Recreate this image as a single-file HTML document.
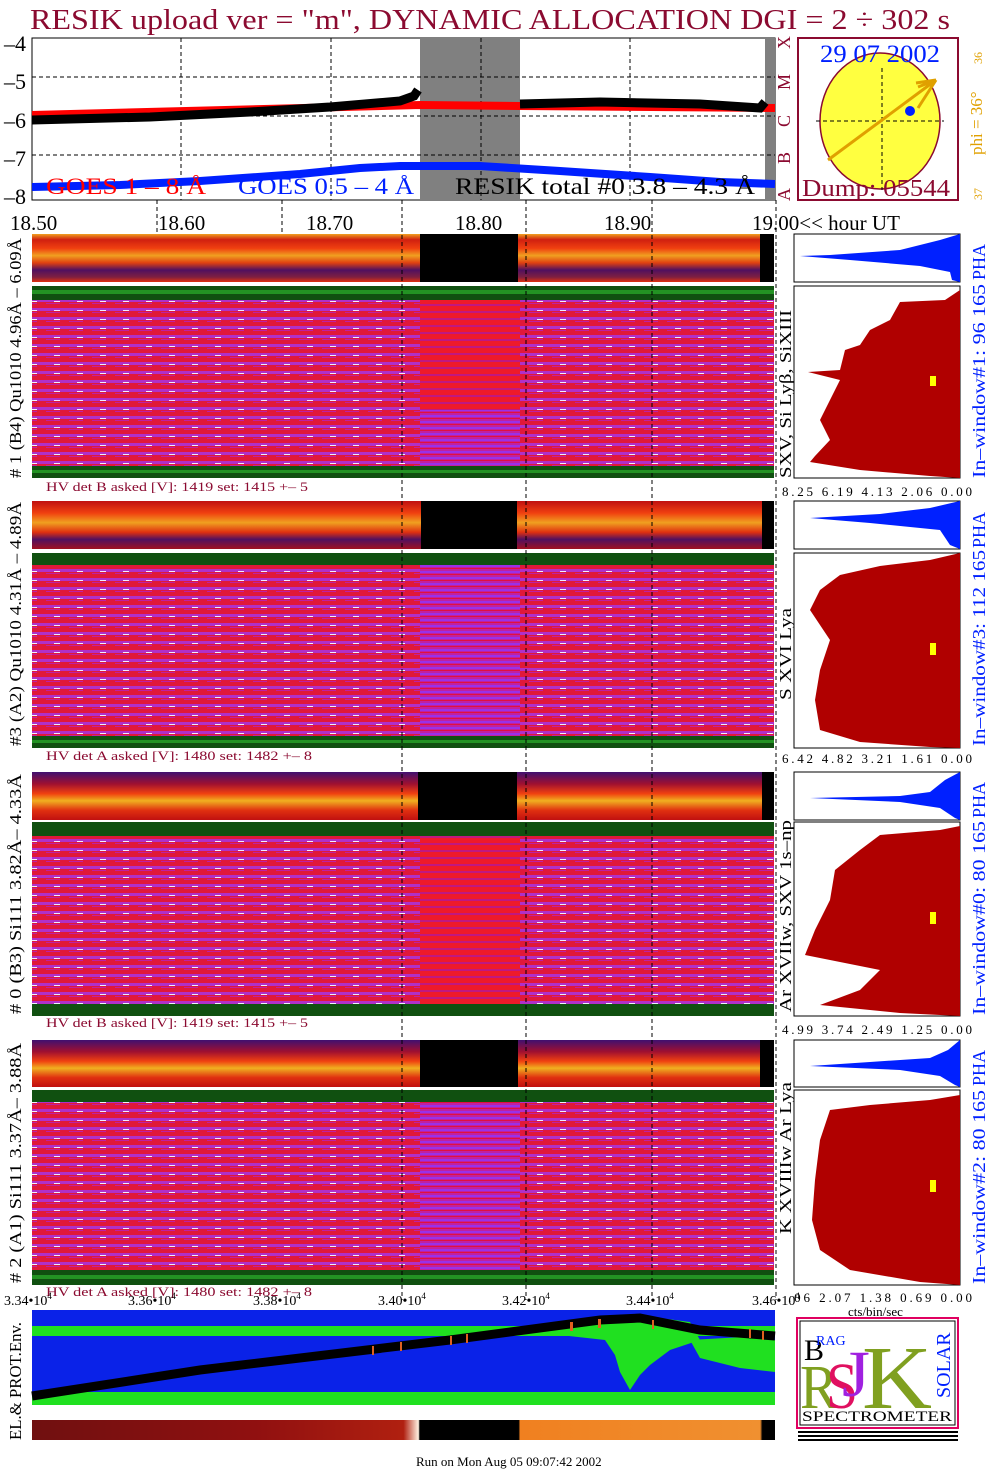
<!DOCTYPE html>
<html><head><meta charset="utf-8"><style>
html,body{margin:0;padding:0;background:#fff}
svg{display:block}
text{font-family:"Liberation Serif",serif}
</style></head><body>
<svg width="1004" height="1476" viewBox="0 0 1004 1476" xmlns="http://www.w3.org/2000/svg">
<defs>
<linearGradient id="small1" x1="0" y1="0" x2="0" y2="1">
<stop offset="0" stop-color="#f0a020"/><stop offset="0.12" stop-color="#d02010"/><stop offset="0.3" stop-color="#f04010"/><stop offset="0.45" stop-color="#f0a020"/><stop offset="0.6" stop-color="#e04010"/><stop offset="0.75" stop-color="#501060"/><stop offset="0.9" stop-color="#802040"/><stop offset="1" stop-color="#e03010"/></linearGradient>
<linearGradient id="small2" x1="0" y1="0" x2="0" y2="1">
<stop offset="0" stop-color="#c01010"/><stop offset="0.25" stop-color="#f04010"/><stop offset="0.45" stop-color="#f0a020"/><stop offset="0.65" stop-color="#e03010"/><stop offset="0.8" stop-color="#501060"/><stop offset="1" stop-color="#a01020"/></linearGradient>
<linearGradient id="small4" x1="0" y1="0" x2="0" y2="1">
<stop offset="0" stop-color="#401070"/><stop offset="0.25" stop-color="#a01030"/><stop offset="0.45" stop-color="#f04010"/><stop offset="0.6" stop-color="#f0b020"/><stop offset="0.8" stop-color="#e03010"/><stop offset="1" stop-color="#c01010"/></linearGradient>
<pattern id="big" width="23" height="9" patternUnits="userSpaceOnUse">
<rect width="23" height="9" fill="#e0183a"/><rect y="2" width="23" height="3" fill="#b030c8"/><rect y="6" width="14" height="1" fill="#c020a0"/><rect x="8" y="4" width="6" height="1" fill="#f0f0ff"/></pattern>
<pattern id="bigr" width="20" height="7" patternUnits="userSpaceOnUse">
<rect width="20" height="7" fill="#ee1a2a"/><rect y="3" width="20" height="2" fill="#c01880"/></pattern>
<pattern id="bigp" width="20" height="6" patternUnits="userSpaceOnUse">
<rect width="20" height="6" fill="#c020a0"/><rect y="1" width="20" height="2" fill="#9a30e8"/><rect y="4" width="20" height="1" fill="#e01040"/></pattern>
<linearGradient id="bot" x1="0" y1="0" x2="1" y2="0">
<stop offset="0" stop-color="#701010"/><stop offset="0.3" stop-color="#901010"/><stop offset="0.5" stop-color="#b02010"/><stop offset="0.52" stop-color="#fff0e0"/><stop offset="0.522" stop-color="#000"/><stop offset="0.655" stop-color="#000"/><stop offset="0.657" stop-color="#f08020"/><stop offset="0.98" stop-color="#f09030"/><stop offset="0.983" stop-color="#000"/><stop offset="1" stop-color="#000"/></linearGradient>
</defs>

<text x="30" y="29" font-size="29" fill="#8b0a30" textLength="920" lengthAdjust="spacingAndGlyphs">RESIK upload ver = "m", DYNAMIC ALLOCATION  DGI =   2 ÷ 302 s</text>

<rect x="32" y="38" width="743" height="162" fill="#fff" stroke="#000"/>
<rect x="420" y="38" width="100" height="162" fill="#808080"/>
<rect x="765" y="38" width="10" height="162" fill="#808080"/>
<g stroke="#000" stroke-dasharray="4,3" stroke-width="1">
<line x1="181" y1="38" x2="181" y2="200"/><line x1="331" y1="38" x2="331" y2="200"/><line x1="481" y1="38" x2="481" y2="200"/><line x1="630" y1="38" x2="630" y2="200"/>
<line x1="32" y1="77" x2="775" y2="77"/><line x1="32" y1="116" x2="775" y2="116"/><line x1="32" y1="155" x2="775" y2="155"/>
</g>
<path d="M32,115 L420,105 L520,106 L775,108" stroke="#ff0000" stroke-width="8" fill="none"/>
<path d="M32,120 L150,117 L250,112 L330,107 L400,101 L414,96 L418,90 M520,104 L600,102 L700,104 L760,108 L765,102" stroke="#000" stroke-width="9" fill="none"/>
<path d="M32,187 L120,185 L200,181 L300,174 L360,168 L400,166 L480,166 L560,171 L650,177 L720,182 L775,184" stroke="#0020ff" stroke-width="8" fill="none"/>
<g font-size="23">
<text x="46" y="194" fill="#ff0000" textLength="160" lengthAdjust="spacingAndGlyphs">GOES 1 – 8 Å</text>
<text x="238" y="194" fill="#0020ff" textLength="176" lengthAdjust="spacingAndGlyphs">GOES 0.5 – 4 Å</text>
<text x="455" y="194" fill="#000" textLength="300" lengthAdjust="spacingAndGlyphs">RESIK total #0  3.8 – 4.3 Å</text>
</g>
<g font-size="22" fill="#000">
<text x="4" y="51">–4</text><text x="4" y="89">–5</text><text x="4" y="128">–6</text><text x="4" y="166">–7</text><text x="4" y="204">–8</text>
</g>
<text transform="translate(790,201) rotate(-90)" font-size="18" fill="#8b0a30" textLength="165" lengthAdjust="spacing">A   B   C   M   X</text>
<rect x="798" y="38" width="160" height="162" fill="#fff" stroke="#8b0a30" stroke-width="2"/>
<ellipse cx="880" cy="121" rx="60" ry="68" fill="#ffff40" stroke="#8b0a30" stroke-width="1.5"/>
<line x1="816" y1="121" x2="944" y2="121" stroke="#000" stroke-dasharray="4,3"/>
<line x1="882" y1="68" x2="882" y2="190" stroke="#000" stroke-dasharray="4,3"/>
<path d="M828,160 L936,80 M918,87 L936,80 L916,83 M918,108 L936,80" stroke="#e0a000" stroke-width="3" fill="none"/>
<circle cx="910" cy="111" r="5" fill="#0020ff"/>
<text x="820" y="62" font-size="25" fill="#0020ff" textLength="120" lengthAdjust="spacingAndGlyphs">29 07 2002</text>
<text x="802" y="196" font-size="24" fill="#8b0a30" textLength="148" lengthAdjust="spacingAndGlyphs">Dump: 05544</text>
<text transform="translate(982,155) rotate(-90)" font-size="17" fill="#e0a000">phi =  36°</text>
<text transform="translate(982,64) rotate(-90)" font-size="12" fill="#e0a000">36</text>
<text transform="translate(982,200) rotate(-90)" font-size="12" fill="#e0a000">37</text>

<g font-size="21" fill="#000">
<text x="10" y="230">18.50</text><text x="158" y="230">18.60</text><text x="306" y="230">18.70</text><text x="455" y="230">18.80</text><text x="604" y="230">18.90</text><text x="752" y="230">19.00&lt;&lt; hour UT</text>
</g>

<g>
<rect x="32" y="234" width="742" height="48" fill="url(#small1)"/>
<rect x="420" y="234" width="98" height="48" fill="#000"/><rect x="760" y="234" width="14" height="48" fill="#000"/>
<rect x="32" y="286" width="742" height="192" fill="url(#big)"/>
<rect x="32" y="286" width="742" height="14" fill="#105010"/><rect x="32" y="290" width="742" height="4" fill="#30c030" opacity="0.6"/>
<rect x="32" y="466" width="742" height="12" fill="#105010"/><rect x="32" y="470" width="742" height="3" fill="#30c030" opacity="0.6"/>
<rect x="420" y="300" width="100" height="110" fill="url(#bigr)"/><rect x="420" y="410" width="100" height="56" fill="url(#bigp)"/>
<text x="46" y="491" font-size="13" fill="#8b0a30" textLength="262" lengthAdjust="spacingAndGlyphs">HV det B asked [V]:  1419 set:  1415  +–    5</text>
</g>
<g>
<rect x="32" y="501" width="742" height="48" fill="url(#small2)"/>
<rect x="421" y="501" width="96" height="48" fill="#000"/><rect x="762" y="501" width="12" height="48" fill="#000"/>
<rect x="32" y="553" width="742" height="195" fill="url(#big)"/>
<rect x="32" y="553" width="742" height="12" fill="#105010"/><rect x="32" y="736" width="742" height="12" fill="#105010"/><rect x="32" y="740" width="742" height="3" fill="#30c030" opacity="0.6"/>
<rect x="420" y="565" width="100" height="171" fill="url(#bigp)"/>
<text x="46" y="760" font-size="13" fill="#8b0a30" textLength="266" lengthAdjust="spacingAndGlyphs">HV det A asked [V]:  1480 set:  1482  +–    8</text>
</g>
<g>
<rect x="32" y="772" width="742" height="48" fill="url(#small4)"/>
<rect x="418" y="772" width="99" height="48" fill="#000"/><rect x="762" y="772" width="12" height="48" fill="#000"/>
<rect x="32" y="822" width="742" height="194" fill="url(#big)"/>
<rect x="32" y="822" width="742" height="14" fill="#105010"/><rect x="32" y="1004" width="742" height="12" fill="#105010"/>
<rect x="420" y="836" width="100" height="168" fill="url(#bigr)"/>
<text x="46" y="1027" font-size="13" fill="#8b0a30" textLength="262" lengthAdjust="spacingAndGlyphs">HV det B asked [V]:  1419 set:  1415  +–    5</text>
</g>
<g>
<rect x="32" y="1040" width="742" height="47" fill="url(#small4)"/>
<rect x="420" y="1040" width="98" height="47" fill="#000"/><rect x="760" y="1040" width="14" height="47" fill="#000"/>
<rect x="32" y="1090" width="742" height="195" fill="url(#big)"/>
<rect x="32" y="1090" width="742" height="12" fill="#105010"/><rect x="32" y="1270" width="742" height="15" fill="#105010"/><rect x="32" y="1275" width="742" height="4" fill="#30c030" opacity="0.6"/>
<rect x="420" y="1102" width="100" height="168" fill="url(#bigp)"/>
</g>
<g stroke="#000" stroke-dasharray="4,3"><line x1="402" y1="200" x2="402" y2="1300"/><line x1="526" y1="200" x2="526" y2="1300"/><line x1="652" y1="200" x2="652" y2="1300"/><line x1="282" y1="200" x2="282" y2="232"/><line x1="157" y1="200" x2="157" y2="232"/><line x1="776" y1="200" x2="776" y2="1300"/></g>

<g stroke="#000" fill="#fff">
<rect x="794" y="234" width="166" height="48"/><rect x="794" y="286" width="166" height="192"/>
<rect x="794" y="501" width="166" height="48"/><rect x="794" y="553" width="166" height="195"/>
<rect x="794" y="772" width="166" height="48"/><rect x="794" y="822" width="166" height="194"/>
<rect x="794" y="1040" width="166" height="47"/><rect x="794" y="1090" width="166" height="195"/>
</g>
<g fill="#0020ff">
<path d="M960,234 L940,240 L900,250 L830,255 L800,256 L850,260 L920,266 L950,272 L952,280 L960,282Z"/>
<path d="M960,501 L930,508 L880,514 L810,518 L870,523 L940,530 L950,545 L960,549Z"/>
<path d="M960,772 L945,780 L930,792 L900,796 L810,798 L900,802 L940,808 L955,818 L960,820Z"/>
<path d="M960,1040 L948,1050 L930,1058 L870,1062 L810,1066 L900,1070 L940,1076 L955,1085 L960,1087Z"/>
</g>
<g fill="#b00000">
<path d="M960,290 L945,300 L900,302 L890,320 L870,330 L860,345 L845,350 L840,370 L808,372 L840,380 L830,400 L820,420 L830,440 L815,456 L810,462 L860,470 L930,476 L960,478Z"/>
<path d="M960,553 L930,560 L880,566 L840,575 L820,590 L810,610 L830,640 L820,670 L815,700 L820,730 L860,742 L930,747 L960,748Z"/>
<path d="M960,826 L940,830 L880,835 L860,850 L835,870 L830,900 L815,930 L805,955 L880,970 L860,990 L820,1005 L900,1013 L960,1016Z"/>
<path d="M960,1095 L930,1100 L870,1105 L830,1110 L820,1140 L815,1180 L812,1220 L820,1250 L850,1270 L920,1282 L960,1285Z"/>
</g>
<g fill="#ffff00"><rect x="930" y="376" width="6" height="10"/><rect x="930" y="643" width="6" height="12"/><rect x="930" y="912" width="6" height="12"/><rect x="930" y="1180" width="6" height="12"/></g>
<g font-size="13" fill="#000">
<text x="782" y="496" textLength="190" lengthAdjust="spacing">8.25   6.19   4.13   2.06    0.00</text>
<text x="782" y="763" textLength="190" lengthAdjust="spacing">6.42   4.82   3.21   1.61    0.00</text>
<text x="782" y="1034" textLength="190" lengthAdjust="spacing">4.99   3.74   2.49   1.25    0.00</text>
<text x="788" y="1302" textLength="184" lengthAdjust="spacing">.06   2.07   1.38   0.69    0.00</text>
<text x="848" y="1316">cts/bin/sec</text>
</g>

<g font-size="17" fill="#000">
<text transform="translate(21,478) rotate(-90)" textLength="240" lengthAdjust="spacingAndGlyphs"># 1 (B4) Qu1010 4.96Å – 6.09Å</text>
<text transform="translate(21,746) rotate(-90)" textLength="244" lengthAdjust="spacingAndGlyphs">#3 (A2) Qu1010  4.31Å – 4.89Å</text>
<text transform="translate(21,1014) rotate(-90)" textLength="240" lengthAdjust="spacingAndGlyphs"># 0 (B3) Si111  3.82Å– 4.33Å</text>
<text transform="translate(21,1283) rotate(-90)" textLength="240" lengthAdjust="spacingAndGlyphs"># 2 (A1) Si111  3.37Å– 3.88Å</text>
<text transform="translate(21,1440) rotate(-90)" textLength="118" lengthAdjust="spacingAndGlyphs">EL.&amp; PROT.Env.</text>
<text transform="translate(791,478) rotate(-90)" textLength="168" lengthAdjust="spacingAndGlyphs">SXV, Si Lyβ, SiXIII</text>
<text transform="translate(791,700) rotate(-90)" textLength="92" lengthAdjust="spacingAndGlyphs">S XVI Lya</text>
<text transform="translate(791,1012) rotate(-90)" textLength="192" lengthAdjust="spacingAndGlyphs">Ar XVIIw, SXV 1s–np</text>
<text transform="translate(791,1234) rotate(-90)" textLength="152" lengthAdjust="spacingAndGlyphs">K XVIIIw  Ar Lya</text>
</g>
<g font-size="18" fill="#0020ff">
<text transform="translate(985,478) rotate(-90)" textLength="194" lengthAdjust="spacingAndGlyphs">In–window#1:   96 165</text>
<text transform="translate(985,280) rotate(-90)">PHA</text>
<text transform="translate(985,746) rotate(-90)" textLength="196" lengthAdjust="spacingAndGlyphs">In–window#3:  112 165</text>
<text transform="translate(985,548) rotate(-90)">PHA</text>
<text transform="translate(985,1015) rotate(-90)" textLength="194" lengthAdjust="spacingAndGlyphs">In–window#0:   80 165</text>
<text transform="translate(985,818) rotate(-90)">PHA</text>
<text transform="translate(985,1284) rotate(-90)" textLength="194" lengthAdjust="spacingAndGlyphs">In–window#2:   80 165</text>
<text transform="translate(985,1086) rotate(-90)">PHA</text>
</g>

<text x="46" y="1296" font-size="13" fill="#8b0a30" textLength="266" lengthAdjust="spacingAndGlyphs">HV det A asked [V]:  1480 set:  1482  +–    8</text>
<g font-size="14" fill="#000">
<text x="4" y="1305">3.34•10<tspan font-size="9" dy="-6">4</tspan></text>
<text x="128" y="1305">3.36•10<tspan font-size="9" dy="-6">4</tspan></text>
<text x="253" y="1305">3.38•10<tspan font-size="9" dy="-6">4</tspan></text>
<text x="378" y="1305">3.40•10<tspan font-size="9" dy="-6">4</tspan></text>
<text x="502" y="1305">3.42•10<tspan font-size="9" dy="-6">4</tspan></text>
<text x="626" y="1305">3.44•10<tspan font-size="9" dy="-6">4</tspan></text>
<text x="752" y="1305">3.46•10<tspan font-size="9" dy="-6">4</tspan></text>
</g>

<rect x="32" y="1310" width="743" height="95" fill="#0a22e8"/>
<rect x="32" y="1326" width="743" height="10" fill="#20e020"/>
<rect x="32" y="1392" width="743" height="13" fill="#20e020"/>
<path d="M420,1330 L560,1326 L660,1318 L690,1322 L700,1340 L670,1350 L650,1365 L640,1375 L630,1390 L620,1372 L615,1355 L605,1340 L560,1335 L470,1336 Z" fill="#20e020"/>
<path d="M690,1340 L760,1336 L775,1340 L775,1372 L740,1368 L700,1358 Z" fill="#20e020"/>
<path d="M32,1396 L200,1370 L450,1340 L600,1320 L640,1318 L700,1330 L775,1336" stroke="#000" stroke-width="9" fill="none"/>
<g fill="#e06020"><rect x="372" y="1346" width="2" height="9"/><rect x="400" y="1342" width="2" height="9"/><rect x="450" y="1336" width="2" height="9"/><rect x="466" y="1334" width="2" height="9"/><rect x="570" y="1322" width="3" height="9"/><rect x="598" y="1319" width="3" height="9"/><rect x="652" y="1320" width="2" height="9"/><rect x="749" y="1329" width="2" height="9"/><rect x="762" y="1331" width="2" height="9"/></g>
<rect x="32" y="1420" width="743" height="20" fill="url(#bot)"/>

<rect x="797" y="1318" width="161" height="110" fill="#fff" stroke="#e00060" stroke-width="2"/>
<rect x="800" y="1321" width="155" height="104" fill="none" stroke="#000"/>
<text x="804" y="1360" font-size="30" fill="#000">B</text>
<text x="816" y="1345" font-size="14" fill="#0020ff">RAG</text>
<text x="800" y="1408" font-size="62" fill="#80a020" textLength="38" lengthAdjust="spacingAndGlyphs">R</text>
<text x="826" y="1408" font-size="66" fill="#e01060" textLength="32" lengthAdjust="spacingAndGlyphs">S</text>
<text x="842" y="1396" font-size="66" fill="#a020e0" textLength="28" lengthAdjust="spacingAndGlyphs">J</text>
<text x="862" y="1408" font-size="90" fill="#80a020" textLength="70" lengthAdjust="spacingAndGlyphs">K</text>
<text transform="translate(950,1398) rotate(-90)" font-size="20" fill="#0020ff">SOLAR</text>
<text x="802" y="1421" font-size="15" fill="#000" textLength="150" lengthAdjust="spacingAndGlyphs">SPECTROMETER</text>
<g fill="#000"><rect x="798" y="1431" width="160" height="2"/><rect x="798" y="1435" width="160" height="2"/><rect x="798" y="1439" width="160" height="2"/></g>

<text x="416" y="1466" font-size="13" fill="#000">Run on Mon Aug 05 09:07:42 2002</text>
</svg>
</body></html>
